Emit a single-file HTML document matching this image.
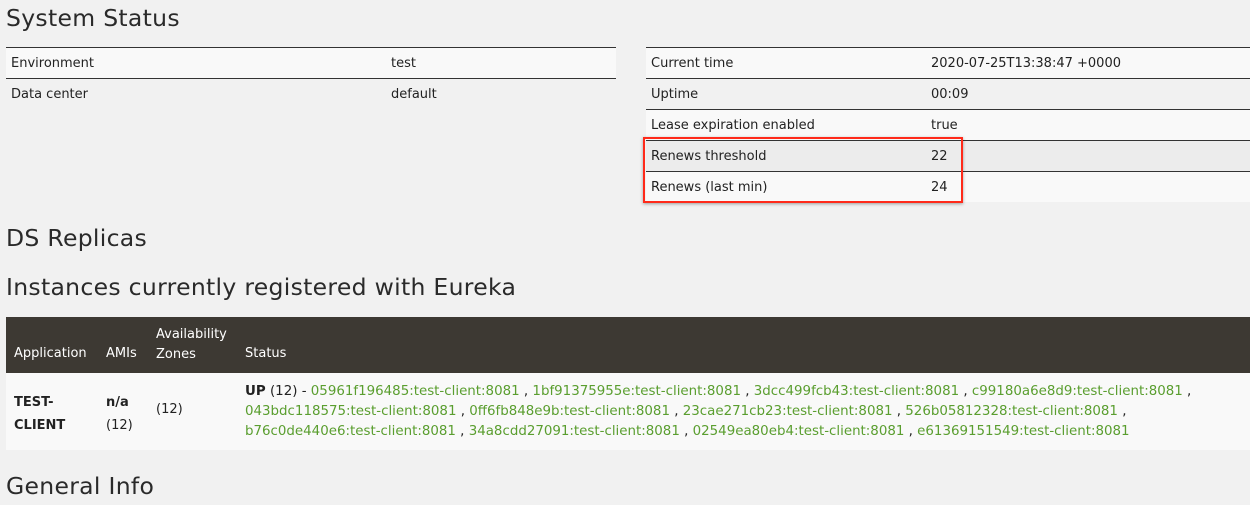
<!DOCTYPE html>
<html><head><meta charset="utf-8"><style>
body{margin:0;background:#f1f1f1;font-family:"DejaVu Sans","Liberation Sans",sans-serif;color:#222;width:1250px;height:505px;overflow:hidden;position:relative;font-size:13px}
h1,h2{position:absolute;margin:0;font-weight:normal;font-size:23.5px;left:6px;color:#2a2a2a;letter-spacing:0.3px}
.t{position:absolute;border-collapse:collapse}
.t td{padding:0 5px;border-top:1px solid #333;vertical-align:middle;height:30px}
.t tr.a td{background:#f9f9f9}
.t tr.b td{background:#ececec}
.t tr.n td{background:transparent}
.box{position:absolute;left:643px;top:137px;width:316px;height:62px;border:2px solid #ff2a1a;box-shadow:0 1px 3px rgba(0,0,0,.35)}
.g{color:#5a9e2f}
.hd{position:absolute;left:6px;top:317px;width:1244px;height:56px;background:#3d3933;color:#fff}
.hd div,.bd div{position:absolute}
.bd{position:absolute;left:6px;top:373px;width:1244px;height:77px;background:#f9f9f9}
</style></head><body>
<h1 style="top:4px">System Status</h1>
<table class="t" style="left:6px;top:47px;width:610px">
<tr class="a"><td style="width:370px">Environment</td><td>test</td></tr>
<tr class="n"><td>Data center</td><td>default</td></tr>
</table>
<table class="t" style="left:646px;top:47px;width:604px">
<tr class="a"><td style="width:270px">Current time</td><td>2020-07-25T13:38:47 +0000</td></tr>
<tr class="n"><td>Uptime</td><td>00:09</td></tr>
<tr class="a"><td>Lease expiration enabled</td><td>true</td></tr>
<tr class="b"><td>Renews threshold</td><td>22</td></tr>
<tr class="a"><td>Renews (last min)</td><td>24</td></tr>
</table>
<div class="box"></div>
<h2 style="top:224px">DS Replicas</h2>
<h2 style="top:273px">Instances currently registered with Eureka</h2>
<div class="hd">
<div style="left:8px;top:29px">Application</div>
<div style="left:100px;top:8px;top:29px">AMIs</div>
<div style="left:150px;top:8px;line-height:20px">Availability<br>Zones</div>
<div style="left:239px;top:29px">Status</div>
</div>
<div class="bd">
<div style="left:8px;top:18px;line-height:23px;font-weight:bold">TEST-<br>CLIENT</div>
<div style="left:100px;top:18px;line-height:23px"><b>n/a</b><br>(12)</div>
<div style="left:150px;top:29px">(12)</div>
<div style="left:239px;top:9px;line-height:20px;white-space:nowrap;font-size:13.4px"><b>UP</b> (12) - <span class="g">05961f196485:test-client:8081</span> , <span class="g">1bf91375955e:test-client:8081</span> , <span class="g">3dcc499fcb43:test-client:8081</span> , <span class="g">c99180a6e8d9:test-client:8081</span> ,<br><span class="g">043bdc118575:test-client:8081</span> , <span class="g">0ff6fb848e9b:test-client:8081</span> , <span class="g">23cae271cb23:test-client:8081</span> , <span class="g">526b05812328:test-client:8081</span> ,<br><span class="g">b76c0de440e6:test-client:8081</span> , <span class="g">34a8cdd27091:test-client:8081</span> , <span class="g">02549ea80eb4:test-client:8081</span> , <span class="g">e61369151549:test-client:8081</span></div>
</div>
<h2 style="top:472px">General Info</h2>
</body></html>
